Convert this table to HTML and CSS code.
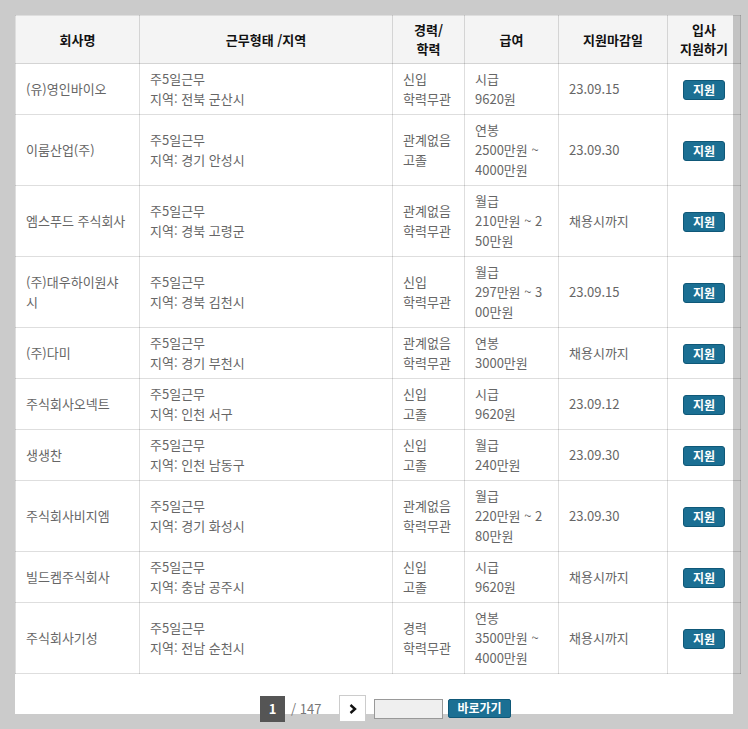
FILE: index.html
```html
<!DOCTYPE html>
<html lang="ko">
<head>
<meta charset="utf-8">
<title>채용정보</title>
<link rel="stylesheet" href="styles.css">
</head>
<body>
<div class="frame">
  <div class="panel">
    <table class="jobs">
      <colgroup>
        <col class="c-name"><col class="c-type"><col class="c-career"><col class="c-pay"><col class="c-date"><col class="c-apply">
      </colgroup>
      <thead>
        <tr>
          <th>회사명</th>
          <th>근무형태 /지역</th>
          <th>경력/<br>학력</th>
          <th>급여</th>
          <th>지원마감일</th>
          <th>입사<br>지원하기</th>
        </tr>
      </thead>
      <tbody>
        <tr><td>(유)영인바이오</td><td>주5일근무<br>지역: 전북 군산시</td><td>신입<br>학력무관</td><td>시급<br>9620원</td><td>23.09.15</td><td class="apply"><span class="btn">지원</span></td></tr>
        <tr><td>이룸산업(주)</td><td>주5일근무<br>지역: 경기 안성시</td><td>관계없음<br>고졸</td><td>연봉<br>2500만원 ~<br>4000만원</td><td>23.09.30</td><td class="apply"><span class="btn">지원</span></td></tr>
        <tr><td>엠스푸드 주식회사</td><td>주5일근무<br>지역: 경북 고령군</td><td>관계없음<br>학력무관</td><td>월급<br>210만원 ~ 2<br>50만원</td><td>채용시까지</td><td class="apply"><span class="btn">지원</span></td></tr>
        <tr><td>(주)대우하이원샤<br>시</td><td>주5일근무<br>지역: 경북 김천시</td><td>신입<br>학력무관</td><td>월급<br>297만원 ~ 3<br>00만원</td><td>23.09.15</td><td class="apply"><span class="btn">지원</span></td></tr>
        <tr><td>(주)다미</td><td>주5일근무<br>지역: 경기 부천시</td><td>관계없음<br>학력무관</td><td>연봉<br>3000만원</td><td>채용시까지</td><td class="apply"><span class="btn">지원</span></td></tr>
        <tr><td>주식회사오넥트</td><td>주5일근무<br>지역: 인천 서구</td><td>신입<br>고졸</td><td>시급<br>9620원</td><td>23.09.12</td><td class="apply"><span class="btn">지원</span></td></tr>
        <tr><td>생생찬</td><td>주5일근무<br>지역: 인천 남동구</td><td>신입<br>고졸</td><td>월급<br>240만원</td><td>23.09.30</td><td class="apply"><span class="btn">지원</span></td></tr>
        <tr><td>주식회사비지엠</td><td>주5일근무<br>지역: 경기 화성시</td><td>관계없음<br>학력무관</td><td>월급<br>220만원 ~ 2<br>80만원</td><td>23.09.30</td><td class="apply"><span class="btn">지원</span></td></tr>
        <tr><td>빌드켐주식회사</td><td>주5일근무<br>지역: 충남 공주시</td><td>신입<br>고졸</td><td>시급<br>9620원</td><td>채용시까지</td><td class="apply"><span class="btn">지원</span></td></tr>
        <tr><td>주식회사기성</td><td>주5일근무<br>지역: 전남 순천시</td><td>경력<br>학력무관</td><td>연봉<br>3500만원 ~<br>4000만원</td><td>채용시까지</td><td class="apply"><span class="btn">지원</span></td></tr>
      </tbody>
    </table>
    <div class="pager">
      <span class="cur">1</span>
      <span class="total">/ 147</span>
      <span class="next"><svg width="8" height="10" viewBox="0 0 8 10"><polyline points="1.5,1 6,5 1.5,9" fill="none" stroke="#111" stroke-width="2.4"/></svg></span>
      <span class="goto"></span>
      <span class="go">바로가기</span>
    </div>
  </div>
</div>
</body>
</html>
```

FILE: styles.css
```css
html, body {
  margin: 0;
  padding: 0;
}
body {
  background: #cbcbcb;
  font-family: "Noto Sans CJK KR", "Noto Sans", sans-serif;
  font-size: 13px;
}
.frame {
  box-sizing: border-box;
  height: 729px;
  padding: 15px;
  overflow: hidden;
}
.panel {
  width: 718px;
  height: 699px;
  background: #fff;
  overflow: visible;
}
.jobs {
  width: 725px;
  border-collapse: collapse;
  table-layout: fixed;
}
.c-name { width: 124px; }
.c-type { width: 253px; }
.c-career { width: 72px; }
.c-pay { width: 94px; }
.c-date { width: 109px; }
.c-apply { width: 73px; }

.jobs th,
.jobs td {
  border: 1px solid rgba(0, 0, 0, 0.13);
}
.jobs th {
  background: rgba(0, 0, 0, 0.045);
  color: #111;
  font-weight: bold;
  font-size: 13px;
  line-height: 19px;
  padding: 4px 2px 5px;
  height: 38px;
  text-align: center;
}
.jobs td {
  color: #666;
  font-size: 13px;
  line-height: 20px;
  padding: 5px 10px;
  vertical-align: middle;
  text-align: left;
}
.jobs td.apply {
  text-align: center;
  padding: 5px 0;
}
.btn {
  display: inline-block;
  box-sizing: border-box;
  width: 42px;
  height: 20px;
  background: #1b6f93;
  border: 1px solid #0f5878;
  border-radius: 3px;
  color: #fff;
  font-weight: bold;
  font-size: 12px;
  line-height: 17px;
  text-align: center;
  vertical-align: middle;
}
.pager {
  display: flex;
  align-items: center;
  margin-top: 21px;
  padding-left: 245px;
}
.cur {
  width: 25px;
  height: 26px;
  background: #555;
  color: #fff;
  font-weight: bold;
  font-size: 13px;
  line-height: 26px;
  text-align: center;
}
.total {
  margin-left: 6px;
  color: #777;
  font-size: 13px;
  width: 48px;
}
.next {
  box-sizing: border-box;
  width: 27px;
  height: 27px;
  border: 1px solid #ccc;
  background: #fff;
  display: flex;
  align-items: center;
  justify-content: center;
}
.goto {
  box-sizing: border-box;
  margin-left: 8px;
  width: 69px;
  height: 20px;
  border: 1px solid #999;
  background: #efefef;
}
.go {
  box-sizing: border-box;
  margin-left: 5px;
  width: 63px;
  height: 19px;
  background: #1b6f93;
  border: 1px solid #0f5878;
  border-radius: 2px;
  color: #fff;
  font-weight: bold;
  font-size: 12px;
  line-height: 16px;
  text-align: center;
}
```
